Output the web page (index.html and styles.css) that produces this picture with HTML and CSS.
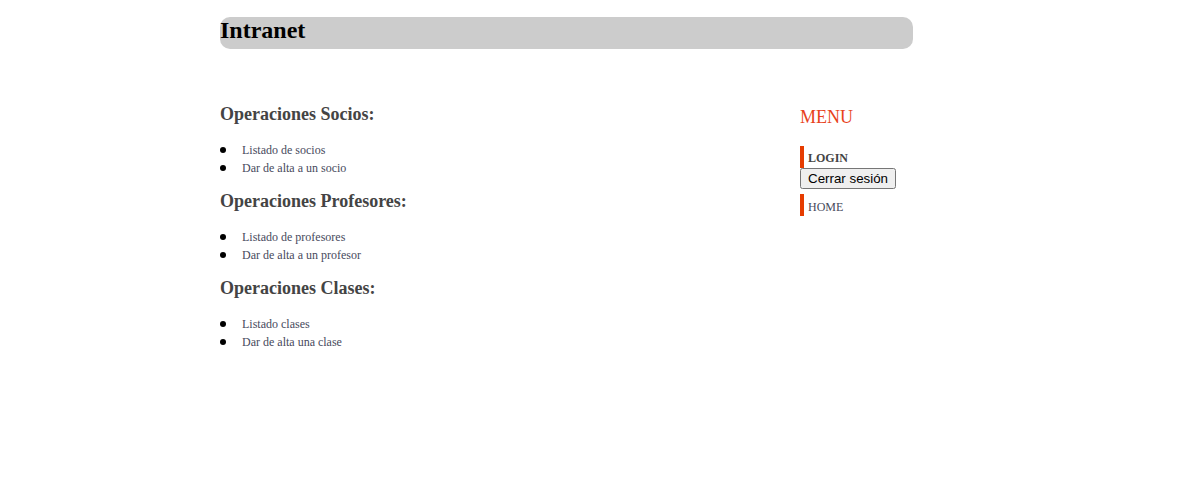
FILE: index.html
```html
<!DOCTYPE html>
<html lang="es">
<head>
<meta charset="utf-8">
<title>Intranet</title>
<link rel="stylesheet" href="styles.css">
</head>
<body>
<div class="wrapper">
  <header class="header">
    <h1 class="title">Intranet</h1>
  </header>
  <div class="layout">
    <main class="main">
      <h3 class="section-title">Operaciones Socios:</h3>
      <ul class="ops">
        <li><a href="#">Listado de socios</a></li>
        <li><a href="#">Dar de alta a un socio</a></li>
      </ul>
      <h3 class="section-title">Operaciones Profesores:</h3>
      <ul class="ops">
        <li><a href="#">Listado de profesores</a></li>
        <li><a href="#">Dar de alta a un profesor</a></li>
      </ul>
      <h3 class="section-title">Operaciones Clases:</h3>
      <ul class="ops">
        <li><a href="#">Listado clases</a></li>
        <li><a href="#">Dar de alta una clase</a></li>
      </ul>
    </main>
    <aside class="sidebar">
      <h3 class="menu-title">MENU</h3>
      <div class="menu-item menu-item-bold">LOGIN</div>
      <button class="logout" type="button">Cerrar sesión</button>
      <div class="menu-item menu-item-link"><a href="#">HOME</a></div>
    </aside>
  </div>
</div>
</body>
</html>
```
FILE: styles.css
```css
html, body {
  margin: 0;
  padding: 0;
  background: #fff;
}

body {
  font-family: "Liberation Serif", "Times New Roman", serif;
  color: #444;
}

.wrapper {
  width: 693px;
  margin: 17px 0 0 220px;
}

.header {
  background: #cccccc;
  border-radius: 10px;
  height: 32px;
}

.title {
  margin: 0;
  font-size: 24px;
  font-weight: bold;
  color: #000;
  line-height: 27px;
}

.layout {
  display: flex;
  margin-top: 55px;
}

.main {
  width: 580px;
}

.sidebar {
  width: 113px;
  padding-top: 3px;
}

.section-title {
  font-size: 18px;
  font-weight: bold;
  color: #444;
  margin: 0 0 16px 0;
  line-height: 21px;
}

.ops {
  margin: 0 0 14px 0;
  padding: 0;
  list-style: none;
  font-size: 12px;
  line-height: 18px;
}

.ops li::before {
  content: "";
  display: inline-block;
  width: 6px;
  height: 6px;
  border-radius: 50%;
  background: #000;
  margin: 0 16px 0 0;
  vertical-align: 1px;
}

.ops a {
  color: #474a5c;
  text-decoration: none;
}

.menu-title {
  font-size: 18px;
  font-weight: normal;
  color: #e8421b;
  margin: 0 0 18px 0;
  line-height: 21px;
}

.menu-item {
  border-left: 4px solid #e63c00;
  padding: 5px 0 3px 4px;
  font-size: 12px;
  line-height: 14px;
  color: #444;
}

.menu-item-bold {
  font-weight: bold;
}

.menu-item-link {
  padding: 6px 0 2px 4px;
}

.menu-item a {
  color: #474a5c;
  text-decoration: none;
}

.logout {
  display: block;
  margin: 0 0 5px 0;
}
```
